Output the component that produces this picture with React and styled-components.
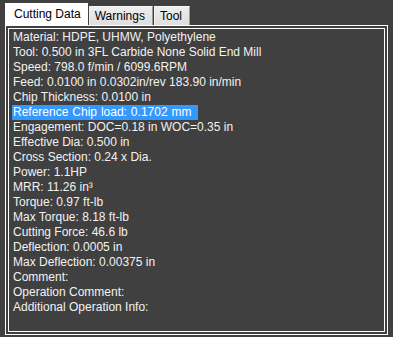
import React, { useState } from "react";
import styled, { createGlobalStyle } from "styled-components";

const GlobalStyle = createGlobalStyle`
  html, body {
    margin: 0;
    padding: 0;
    background: #404040;
  }
  body {
    font-family: "Liberation Sans", Arial, sans-serif;
  }
`;

const Window = styled.div`
  width: 393px;
  height: 337px;
  box-sizing: border-box;
  padding: 3px 0 0 5px;
  background: #404040;
  display: flex;
  flex-direction: column;
`;

const TabStrip = styled.div`
  display: flex;
  align-items: flex-end;
  height: 22px;
  position: relative;
  z-index: 1;
`;

const Tab = styled.div`
  box-sizing: border-box;
  font-size: 12px;
  line-height: 14px;
  color: #000;
  cursor: default;
  ${(p) =>
    p.$active
      ? `
    height: 23px;
    margin-bottom: -1px;
    padding: 4px 7px 0 9px;
    background: #fff;
  `
      : `
    height: 19px;
    margin-left: 1px;
    padding: 2px 7px 0 5px;
    background: linear-gradient(#eeeeee, #dedede);
    border-top: 1px solid #f6f6f6;
    border-left: 1px solid #f2f2f2;
    border-right: 1px solid #9a9a9a;
  `}
`;

const Panel = styled.div`
  box-sizing: border-box;
  width: 383px;
  height: 310px;
  border: 1px solid #fff;
  padding: 2px;
`;

const Inner = styled.div`
  box-sizing: border-box;
  height: 100%;
  border: 1px solid #fff;
  padding: 1px 4px;
  font-size: 12px;
  line-height: 15px;
  color: #f2f2f2;
`;

const Line = styled.div`
  white-space: nowrap;
`;

const Highlight = styled.span`
  display: inline-block;
  background: #3399ff;
  color: #fff;
  padding: 0 6px 0 1px;
  margin-left: -1px;
  word-spacing: 0.6px;
`;

const tabs = ["Cutting Data", "Warnings", "Tool"];

const lines = [
  "Material: HDPE, UHMW, Polyethylene",
  "Tool: 0.500 in 3FL Carbide None Solid End Mill",
  "Speed: 798.0 f/min / 6099.6RPM",
  "Feed: 0.0100 in 0.0302in/rev 183.90 in/min",
  "Chip Thickness: 0.0100 in",
  "Reference Chip load: 0.1702 mm",
  "Engagement: DOC=0.18 in WOC=0.35 in",
  "Effective Dia: 0.500 in",
  "Cross Section: 0.24 x Dia.",
  "Power: 1.1HP",
  "MRR: 11.26 in\u00b3",
  "Torque: 0.97 ft-lb",
  "Max Torque: 8.18 ft-lb",
  "Cutting Force: 46.6 lb",
  "Deflection: 0.0005 in",
  "Max Deflection: 0.00375 in",
  "Comment:",
  "Operation Comment:",
  "Additional Operation Info:",
];

export default function App() {
  const [current, setCurrent] = useState(0);
  const selectedLine = 5;

  return (
    <>
      <GlobalStyle />
      <Window>
        <TabStrip>
          {tabs.map((t, i) => (
            <Tab key={t} $active={i === current} onClick={() => setCurrent(i)}>
              {t}
            </Tab>
          ))}
        </TabStrip>
        <Panel>
          <Inner>
            {lines.map((l, i) => (
              <Line key={l}>
                {i === selectedLine ? <Highlight>{l}</Highlight> : l}
              </Line>
            ))}
          </Inner>
        </Panel>
      </Window>
    </>
  );
}
